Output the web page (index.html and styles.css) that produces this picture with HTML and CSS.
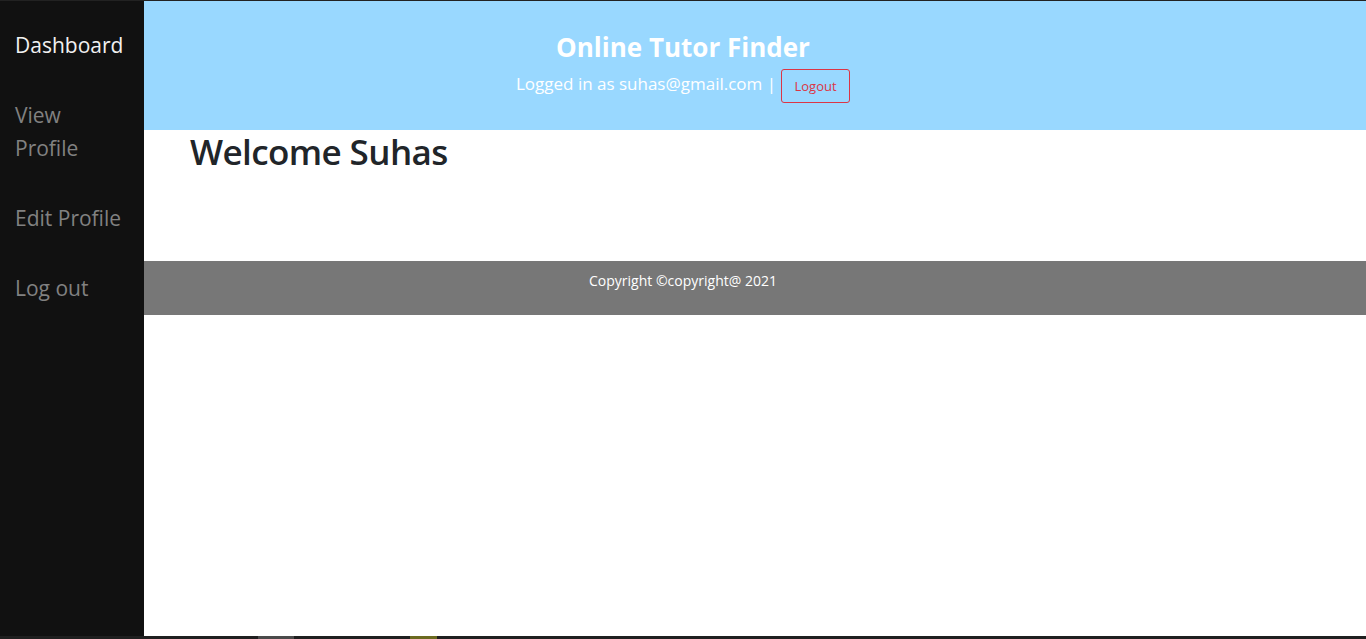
FILE: index.html
```html
<!DOCTYPE html>
<html lang="en">
<head>
<meta charset="utf-8">
<title>Online Tutor Finder - Dashboard</title>
<link rel="stylesheet" href="styles.css">
</head>
<body>
<div class="topline"></div>
<div class="layout">
  <nav class="sidenav">
    <a class="nav-link active" href="#">Dashboard</a>
    <a class="nav-link" href="#">View Profile</a>
    <a class="nav-link" href="#">Edit Profile</a>
    <a class="nav-link" href="#">Log out</a>
  </nav>
  <div class="main">
    <header class="site-header">
      <h3 class="site-title">Online Tutor Finder</h3>
      <div class="user-row">
        <span class="user-text">Logged in as suhas@gmail.com |</span>
        <button class="btn-logout" type="button">Logout</button>
      </div>
    </header>
    <section class="content">
      <h1 class="welcome">Welcome Suhas</h1>
    </section>
    <footer class="site-footer">
      <p class="copy">Copyright ©copyright@ 2021</p>
    </footer>
  </div>
</div>
<div class="taskbar">
  <span class="tb-seg tb-gap1"></span>
  <span class="tb-seg tb-gray"></span>
  <span class="tb-seg tb-gap2"></span>
  <span class="tb-seg tb-olive"></span>
</div>
</body>
</html>
```
FILE: styles.css
```css
* { box-sizing: border-box; }
html, body {
  margin: 0;
  padding: 0;
  height: 639px;
  overflow: hidden;
}
body {
  font-family: "Open Sans", "Noto Sans", "Liberation Sans", sans-serif;
  display: flex;
  flex-direction: column;
  background: #fff;
}
.topline {
  height: 1px;
  background: #222;
  flex: none;
}
.layout {
  display: flex;
  height: 635px;
  flex: none;
}
.sidenav {
  width: 144px;
  flex: none;
  background: #111;
  padding-top: 10px;
  display: flex;
  flex-direction: column;
}
.nav-link {
  display: block;
  padding: 18px 22px 19px 15px;
  font-size: 21px;
  line-height: 33px;
  color: #818181;
  text-decoration: none;
}
.nav-link.active { color: #f1f1f1; }
.main {
  flex: 1;
  display: flex;
  flex-direction: column;
  background: #fff;
}
.site-header {
  background: #99d8ff;
  height: 129px;
  padding: 29px 144px 0 0;
  display: flex;
  flex-direction: column;
  align-items: center;
  color: #fff;
}
.site-title {
  margin: 0;
  font-size: 26px;
  font-weight: 700;
  line-height: 34px;
}
.user-row {
  margin-top: 3px;
  display: flex;
  align-items: center;
  gap: 5px;
  height: 33px;
}
.user-text {
  font-size: 17px;
  line-height: 27px;
}
.btn-logout {
  font-family: inherit;
  font-size: 13px;
  color: #dc3545;
  background: transparent;
  border: 1px solid #dc3545;
  border-radius: 3px;
  height: 34px;
  width: 69px;
  padding: 0;
  margin-top: 4px;
}
.content {
  height: 131px;
  padding-left: 46px;
}
.welcome {
  margin: 0;
  font-size: 35px;
  font-weight: 600;
  line-height: 44px;
  letter-spacing: -0.6px;
  color: #212529;
}
.site-footer {
  height: 54px;
  background: #777;
  padding: 10px 144px 0 0;
  text-align: center;
  color: #fff;
}
.copy {
  margin: 0;
  font-size: 14px;
  line-height: 20px;
}
.taskbar {
  height: 3px;
  flex: none;
  display: flex;
  background: #1f1f1f;
}
.tb-seg { height: 3px; display: block; }
.tb-gap1 { width: 258px; }
.tb-gray { width: 36px; background: #4a4a4a; }
.tb-gap2 { width: 116px; }
.tb-olive { width: 27px; background: #6b6a1f; }
```
